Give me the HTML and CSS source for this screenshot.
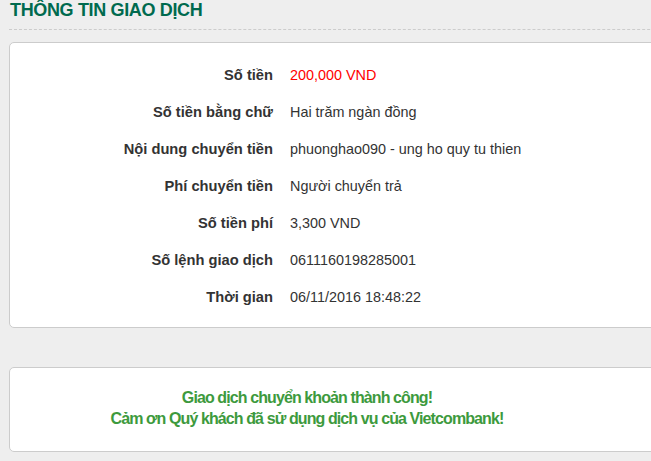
FILE: index.html
```html
<!DOCTYPE html>
<html>
<head>
    <title>Thông tin giao dịch</title>
    <meta charset="utf-8">
    <meta name="viewport" content="width=device-width, initial-scale=1">
    <link rel="stylesheet" href="styles.css">
</head>
<body>
<div class="page">
    <h2 class="title">THÔNG TIN GIAO DỊCH</h2>
    <div class="box info">
        <div class="row">
            <div class="label">Số tiền</div>
            <div class="value amount">200,000 VND</div>
        </div>
        <div class="row">
            <div class="label">Số tiền bằng chữ</div>
            <div class="value">Hai trăm ngàn đồng</div>
        </div>
        <div class="row">
            <div class="label">Nội dung chuyển tiền</div>
            <div class="value">phuonghao090 - ung ho quy tu thien</div>
        </div>
        <div class="row">
            <div class="label">Phí chuyển tiền</div>
            <div class="value">Người chuyển trả</div>
        </div>
        <div class="row">
            <div class="label">Số tiền phí</div>
            <div class="value">3,300 VND</div>
        </div>
        <div class="row">
            <div class="label">Số lệnh giao dịch</div>
            <div class="value">0611160198285001</div>
        </div>
        <div class="row">
            <div class="label">Thời gian</div>
            <div class="value">06/11/2016 18:48:22</div>
        </div>
    </div>
    <div class="box done">
        <p class="message">Giao dịch chuyển khoản thành công!<br>Cảm ơn Quý khách đã sử dụng dịch vụ của Vietcombank!</p>
    </div>
</div>
</body>
</html>
```

FILE: styles.css
```css
* {
    box-sizing: border-box;
}

html, body {
    overflow: hidden;
}

body {
    font-family: Arial, "Liberation Sans", sans-serif;
    background-color: #eeeeee;
    color: #333;
    margin: 0;
    padding: 0;
}

.page {
    padding-left: 9px;
    width: 700px;
}

.title {
    margin: 0;
    padding: 0 0 0 1px;
    height: 30px;
    line-height: 20px;
    font-size: 18px;
    letter-spacing: -0.35px;
    font-weight: bold;
    color: #006a4e;
    border-bottom: 1px dashed #cccccc;
}

.box {
    background-color: #fff;
    border: 1px solid #cccccc;
    border-radius: 5px;
}

.info {
    margin-top: 12px;
    padding: 13px 0 12px 0;
}

.row {
    display: grid;
    grid-template-columns: 263px 1fr;
    column-gap: 17px;
    height: 37px;
    align-items: center;
}

.label {
    text-align: right;
    font-weight: bold;
    font-size: 14.7px;
}

.value {
    font-size: 14.4px;
}

.amount {
    color: #ff0000;
}

.done {
    margin-top: 39px;
    height: 85px;
    padding-top: 19px;
}

.message {
    width: 594px;
    margin: 0;
    text-align: center;
    font-size: 16px;
    letter-spacing: -0.9px;
    line-height: 21px;
    font-weight: bold;
    color: #3d9a3d;
}
```
